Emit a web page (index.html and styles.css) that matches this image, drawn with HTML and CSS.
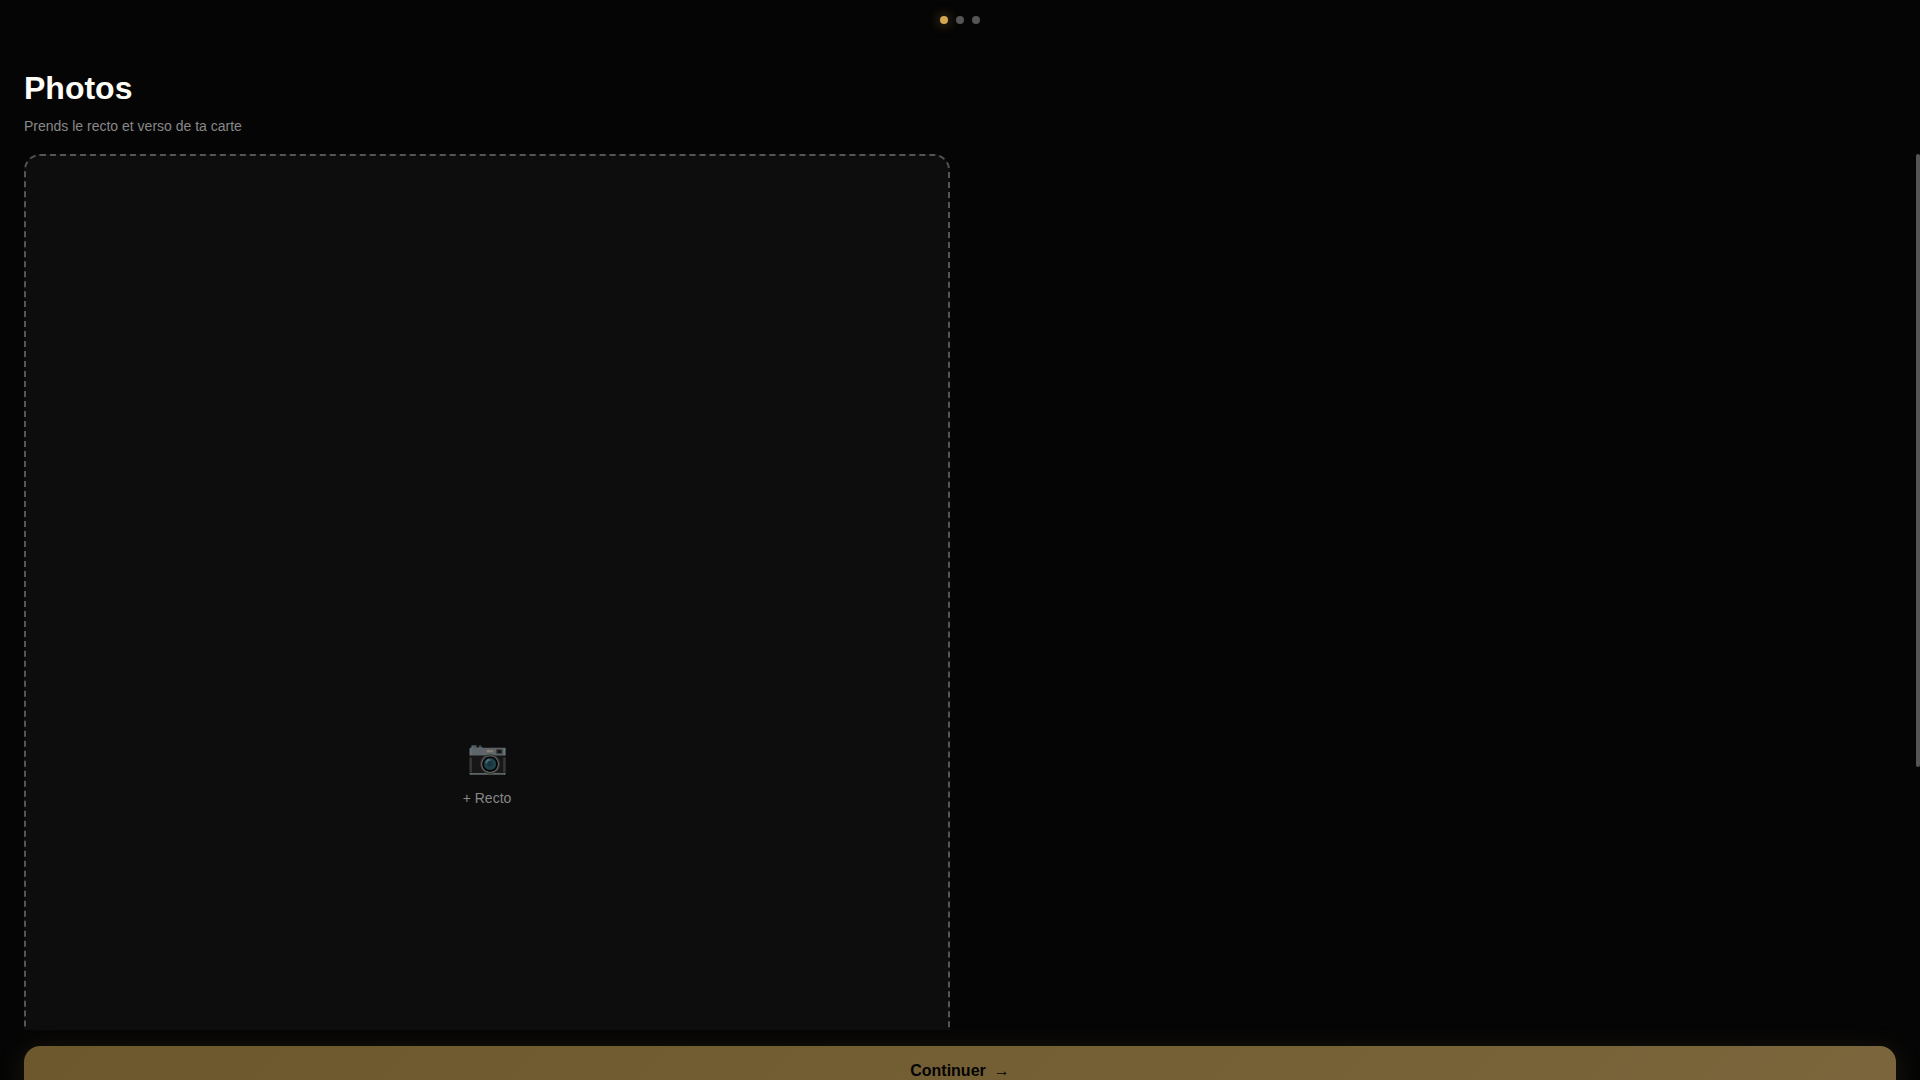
FILE: index.html
```html
<!doctype html>
<html lang="fr">
  <head>
    <meta charset="utf-8">
    <meta name="viewport" content="width=device-width, initial-scale=1">
    <title>Photos</title>
    <link rel="stylesheet" href="styles.css">
  </head>
  <body>
    <div class="screen">
      <div class="steps">
        <span class="dot active"></span>
        <span class="dot"></span>
        <span class="dot"></span>
      </div>
      <header class="head">
        <h1>Photos</h1>
        <p>Prends le recto et verso de ta carte</p>
      </header>
      <div class="scroll-area">
        <main class="content">
          <div class="photo-grid">
            <button type="button" class="photo-slot">
              <span class="photo-icon">📷</span>
              <span>+ Recto</span>
            </button>
          </div>
        </main>
        <div class="scrollbar">
          <div class="thumb"></div>
        </div>
      </div>
      <footer class="actions">
        <button type="button" class="btn-primary" disabled>
          <span>Continuer</span>
          <span>→</span>
        </button>
      </footer>
    </div>
  </body>
</html>
```

FILE: styles.css
```css
* {
  box-sizing: border-box;
  margin: 0;
  padding: 0;
}
body {
  height: 100vh;
  overflow: hidden;
  background: #050505;
  color: #fffef9;
  font-family: "Liberation Sans", Arial, sans-serif;
}
/* a bit taller than the window, the bottom bar runs under the edge */
.screen {
  display: flex;
  flex-direction: column;
  height: calc(100vh + 32px);
}

.steps {
  display: flex;
  justify-content: center;
  gap: 8px;
  padding: 16px;
}
.dot {
  width: 8px;
  height: 8px;
  border-radius: 50%;
  background: #555;
}
.dot.active {
  background: #d4a853;
  box-shadow: 0 0 12px rgba(212, 168, 83, 0.6);
}

.head {
  padding: 30px 24px 20px;
}
.head h1 {
  font-size: 32px;
  line-height: 36px;
  margin-bottom: 12px;
}
.head p {
  font-size: 14px;
  line-height: 16px;
  color: #888;
}

.scroll-area {
  display: flex;
  flex: 1;
  min-height: 0;
}
.content {
  flex: 1;
  overflow-y: auto;
  scrollbar-width: none;
  padding: 0 24px 24px;
}
.scrollbar {
  width: 4px;
}
.thumb {
  height: 70%;
  border-radius: 2px;
  background: #555;
}
.photo-grid {
  display: grid;
  grid-template-columns: 1fr 1fr;
  gap: 16px;
}
.photo-slot {
  display: flex;
  flex-direction: column;
  align-items: center;
  justify-content: center;
  gap: 14px;
  aspect-ratio: 3 / 4;
  border: 2px dashed #555;
  border-radius: 16px;
  background: #0d0d0d;
  color: #888;
  font-family: inherit;
  font-size: 14px;
  cursor: pointer;
}
.photo-icon {
  font-size: 33px;
  opacity: 0.5;
}

.actions {
  padding: 16px 24px;
}
.btn-primary {
  display: flex;
  align-items: center;
  justify-content: center;
  gap: 8px;
  width: 100%;
  height: 50px;
  border: none;
  border-radius: 16px;
  background: linear-gradient(135deg, #d4a853, #f0c674);
  box-shadow: 0 4px 24px rgba(212, 168, 83, 0.25);
  color: #030303;
  font-family: inherit;
  font-size: 16px;
  font-weight: 600;
}
.btn-primary:disabled {
  opacity: 0.5;
}
```
